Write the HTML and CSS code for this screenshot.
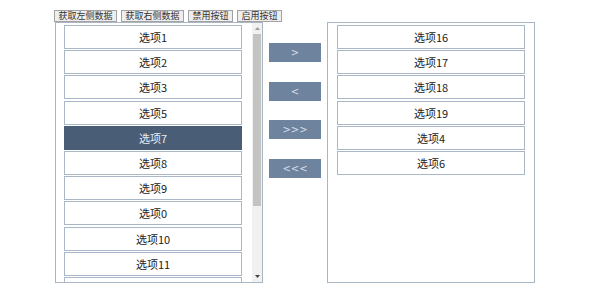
FILE: index.html
```html
<!DOCTYPE html>
<html lang="zh-CN">
<head>
  <meta charset="UTF-8">
  <title>穿梭框</title>
  <link rel="stylesheet" href="styles.css">
</head>
<body>
  <div class="app">
    <!-- top toolbar -->
    <div class="toolbar">
      <button class="tool-btn">获取左侧数据</button>
      <button class="tool-btn">获取右侧数据</button>
      <button class="tool-btn">禁用按钮</button>
      <button class="tool-btn">启用按钮</button>
    </div>

    <div class="transfer">
      <!-- left list with its scrollbar -->
      <div class="panel panel-left">
        <ul class="list">
          <li class="item">选项1</li>
          <li class="item">选项2</li>
          <li class="item">选项3</li>
          <li class="item">选项5</li>
          <li class="item selected">选项7</li>
          <li class="item">选项8</li>
          <li class="item">选项9</li>
          <li class="item">选项0</li>
          <li class="item">选项10</li>
          <li class="item">选项11</li>
          <li class="item">选项12</li>
          <li class="item">选项13</li>
          <li class="item">选项14</li>
          <li class="item">选项15</li>
        </ul>
        <div class="scrollbar">
          <span class="scroll-arrow">
            <svg width="5" height="3" viewBox="0 0 5 3"><path d="M0 3 L2.5 0 L5 3 Z" fill="#9a9a9a"/></svg>
          </span>
          <span class="scroll-thumb"></span>
          <span class="scroll-track"></span>
          <span class="scroll-arrow">
            <svg width="5" height="3" viewBox="0 0 5 3"><path d="M0 0 L2.5 3 L5 0 Z" fill="#444"/></svg>
          </span>
        </div>
      </div>

      <!-- move buttons -->
      <div class="actions">
        <button class="move-btn">&gt;</button>
        <button class="move-btn">&lt;</button>
        <button class="move-btn">&gt;&gt;&gt;</button>
        <button class="move-btn">&lt;&lt;&lt;</button>
      </div>

      <!-- right list -->
      <div class="panel panel-right">
        <ul class="list">
          <li class="item">选项16</li>
          <li class="item">选项17</li>
          <li class="item">选项18</li>
          <li class="item">选项19</li>
          <li class="item">选项4</li>
          <li class="item">选项6</li>
        </ul>
      </div>
    </div>
  </div>
</body>
</html>
```

FILE: styles.css
```css
/* page basics */
body {
  margin: 0;
  background: #fff;
  font-family: "Noto Sans CJK SC", "DejaVu Sans", sans-serif;
  color: #222;
}

.app {
  padding: 10px 0 0 54px;
}

/* toolbar */
.toolbar {
  display: flex;
  gap: 4px;
  height: 12px;
}

.tool-btn {
  height: 12px;
  padding: 0 3.5px;
  border: 1px solid #a2a2a2;
  background: #eeeeee;
  font-family: inherit;
  font-size: 9px;
  line-height: 10px;
  color: #333;
}

/* transfer area */
.transfer {
  display: flex;
  margin-left: 1px;
}

.panel {
  box-sizing: border-box;
  display: flex;
  width: 208px;
  height: 261px;
  border: 1px solid #a9b6c6;
  overflow: hidden;
}

.list {
  flex: 1;
  margin: 0;
  padding: 2px 9px 0 9px;
  list-style: none;
  overflow: hidden;
}

.panel-left .list {
  padding: 2px 10px 0 8px;
}

.item {
  box-sizing: border-box;
  height: 24px;
  margin-bottom: 1.2px;
  border: 1px solid #aab7c7;
  background: #fff;
  font-size: 11px;
  line-height: 22px;
  text-align: center;
}

.item.selected {
  background: #4a5d77;
  border-color: #4a5d77;
  color: #e8edf3;
}

/* hand-drawn scrollbar of the left list */
.scrollbar {
  display: flex;
  flex-direction: column;
  width: 10px;
  background: #f1f1f1;
}

.scroll-arrow {
  display: flex;
  align-items: center;
  justify-content: center;
  height: 11px;
}

.scroll-thumb {
  height: 172px;
  margin: 0 1px;
  background: #c3c3c1;
}

.scroll-track {
  flex: 1;
}

/* middle buttons */
.actions {
  display: flex;
  flex-direction: column;
  gap: 19.6px;
  width: 64px;
  padding: 21px 0 0 6px;
  box-sizing: border-box;
}

.move-btn {
  width: 52px;
  height: 19px;
  padding: 0;
  border: none;
  background: #6e839e;
  color: #d6dde7;
  font-family: "DejaVu Sans", sans-serif;
  font-size: 10px;
  line-height: 19px;
}
```
